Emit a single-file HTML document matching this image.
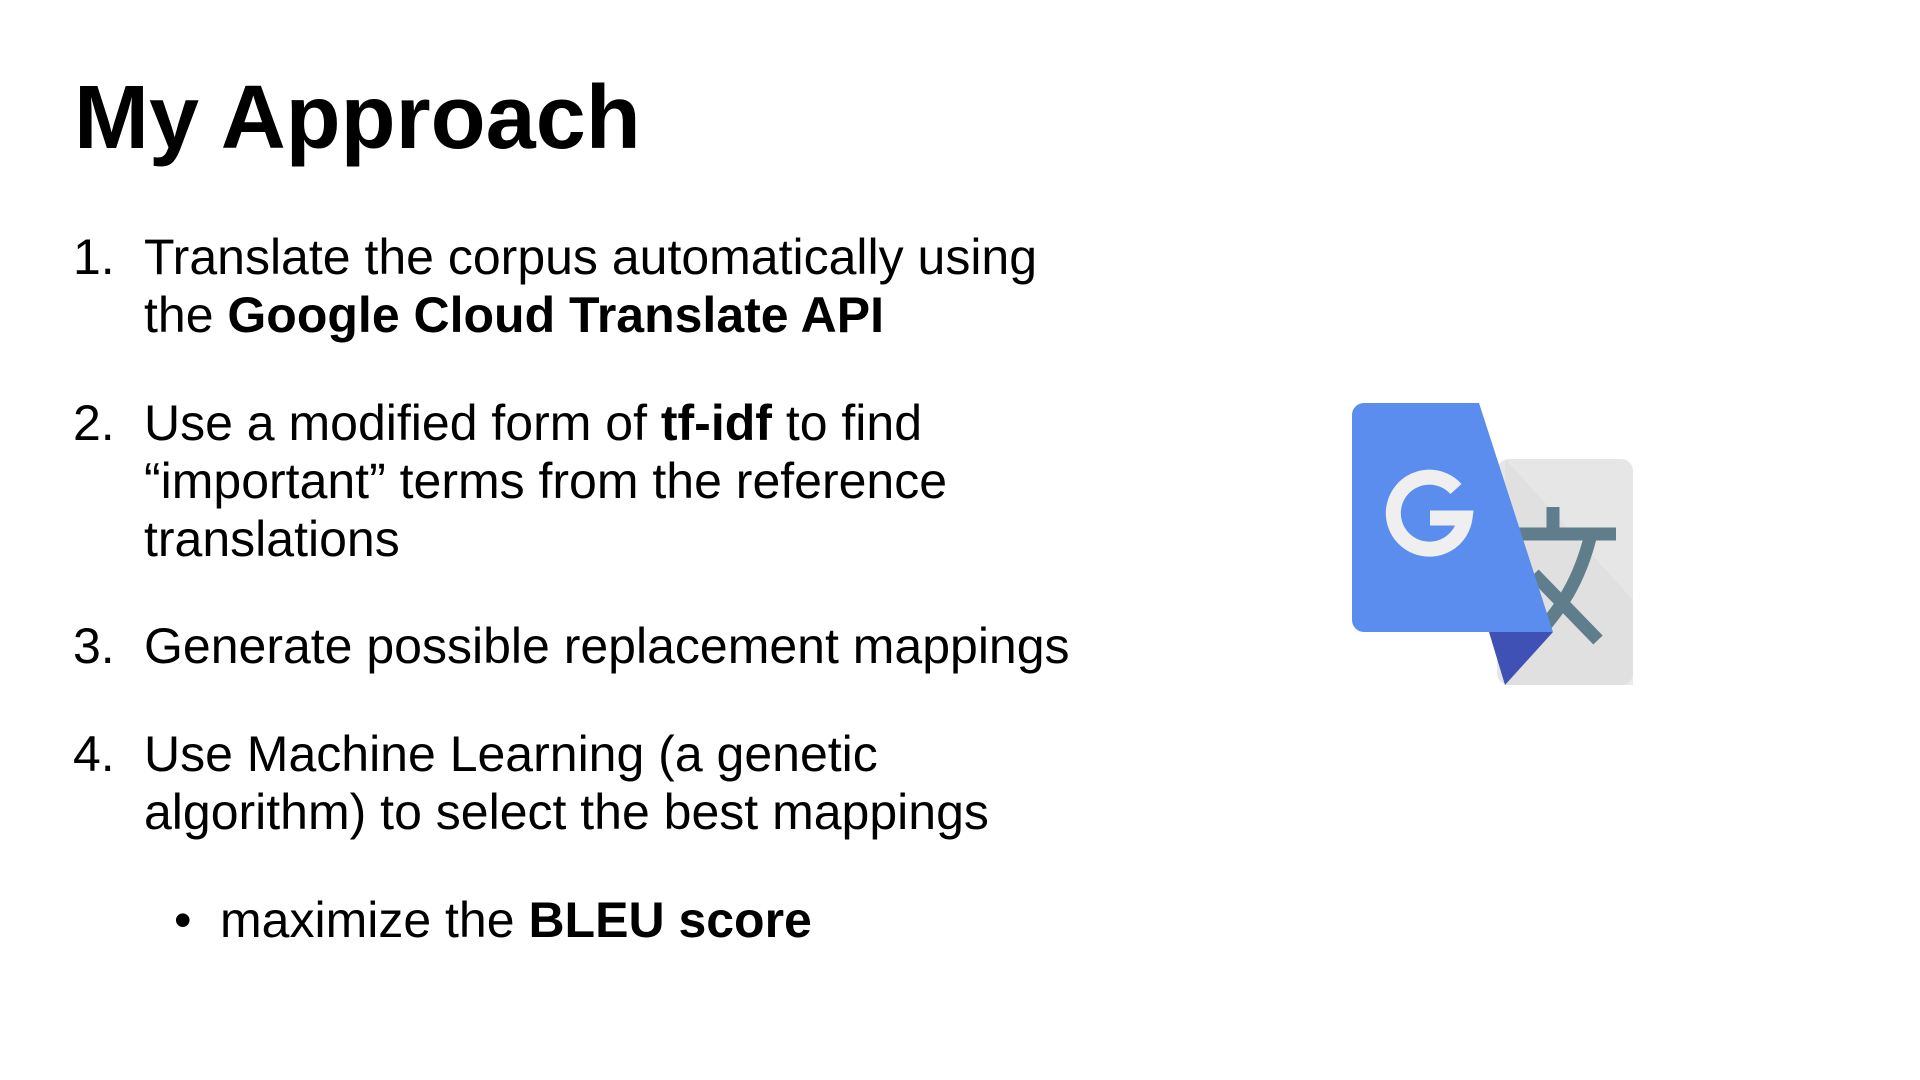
<!DOCTYPE html>
<html><head><meta charset="utf-8"><style>
html,body{margin:0;padding:0;background:#fff;}
body{width:1920px;height:1080px;position:relative;overflow:hidden;font-family:"Liberation Sans",Arial,sans-serif;color:#000;}
.t{position:absolute;left:74px;top:63px;font-size:90px;font-weight:bold;line-height:110px;white-space:nowrap;}
.l{position:absolute;font-size:50px;line-height:58px;white-space:nowrap;}
.n{left:73px}.x{left:144px}
b{font-weight:bold}
</style></head><body>
<div class="t">My Approach</div>
<div class="l n" style="top:228px">1.</div>
<div class="l x" style="top:228px">Translate the corpus automatically using<br>the <b>Google Cloud Translate API</b></div>
<div class="l n" style="top:394px">2.</div>
<div class="l x" style="top:394px">Use a modified form of <b>tf-idf</b> to find<br>“important” terms from the reference<br>translations</div>
<div class="l n" style="top:617px">3.</div>
<div class="l x" style="top:617px">Generate possible replacement mappings</div>
<div class="l n" style="top:725px">4.</div>
<div class="l x" style="top:725px">Use Machine Learning (a genetic<br>algorithm) to select the best mappings</div>
<div class="l" style="top:891px;left:174px">•</div>
<div class="l" style="top:891px;left:220px">maximize the <b>BLEU score</b></div>
<svg style="position:absolute;left:0;top:0" width="1920" height="1080">
<rect x="1497" y="459" width="136" height="226" rx="12" fill="#e6e6e6"/>
<polygon points="1505,459 1633,600 1633,685 1505,685" fill="#dcdcdc" opacity="0.6"/>
<path d="M1553,507 V530 M1518,534 H1616 M1591,534 C1580,580 1560,612 1530,642 M1534,574 L1598,640" stroke="#607d8b" stroke-width="13" fill="none"/>
<polygon points="1489,632 1553,632 1505,685" fill="#3f51b5"/>
<path d="M1364,403 H1479 L1553,632 H1364 A12,12 0 0 1 1352,620 V415 A12,12 0 0 1 1364,403 Z" fill="#5a8dee"/>
<path d="M1456,489 A36,36 0 1 0 1465,518 H1430" stroke="#efefef" stroke-width="15" fill="none"/>
</svg>
</body></html>
